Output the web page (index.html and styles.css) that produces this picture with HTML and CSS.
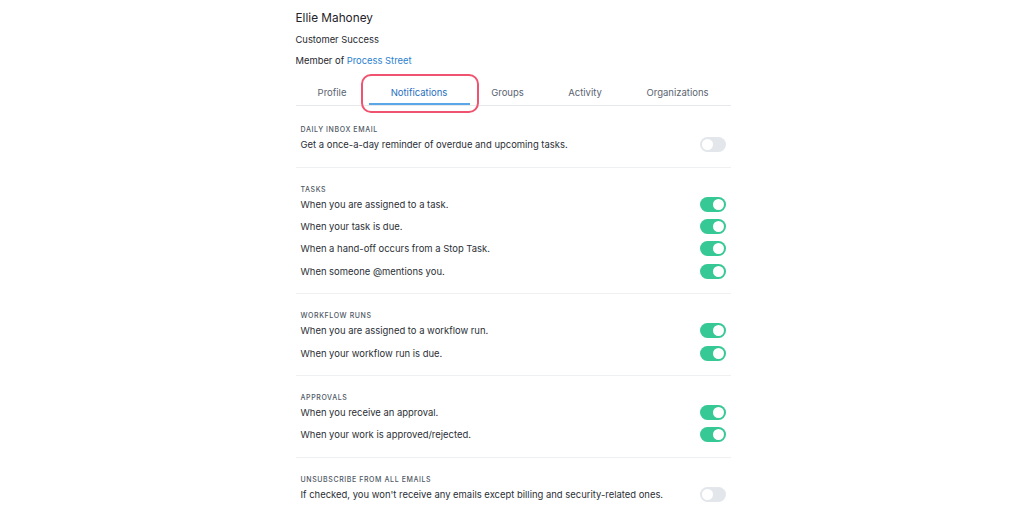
FILE: index.html
```html
<!DOCTYPE html>
<html>
<head>
<meta charset="utf-8">
<link rel="stylesheet" href="styles.css">
</head>
<body>
<div class="page">
  <div class="name">Ellie Mahoney</div>
  <div class="meta">Customer Success</div>
  <div class="meta">Member of <a class="link">Process Street</a></div>
  <nav class="tabs">
    <div class="tab">Profile</div>
    <div class="tab active">Notifications<span class="highlight"></span></div>
    <div class="tab">Groups</div>
    <div class="tab">Activity</div>
    <div class="tab">Organizations</div>
  </nav>
  <section class="section first">
    <div class="label">Daily Inbox Email</div>
    <div class="row"><span>Get a once-a-day reminder of overdue and upcoming tasks.</span><span class="toggle"></span></div>
  </section>
  <section class="section">
    <div class="label">Tasks</div>
    <div class="row"><span>When you are assigned to a task.</span><span class="toggle on"></span></div>
    <div class="row"><span>When your task is due.</span><span class="toggle on"></span></div>
    <div class="row"><span>When a hand-off occurs from a Stop Task.</span><span class="toggle on"></span></div>
    <div class="row"><span>When someone @mentions you.</span><span class="toggle on"></span></div>
  </section>
  <section class="section">
    <div class="label">Workflow Runs</div>
    <div class="row"><span>When you are assigned to a workflow run.</span><span class="toggle on"></span></div>
    <div class="row"><span>When your workflow run is due.</span><span class="toggle on"></span></div>
  </section>
  <section class="section">
    <div class="label">Approvals</div>
    <div class="row"><span>When you receive an approval.</span><span class="toggle on"></span></div>
    <div class="row"><span>When your work is approved/rejected.</span><span class="toggle on"></span></div>
  </section>
  <section class="section">
    <div class="label">Unsubscribe from all emails</div>
    <div class="row"><span>If checked, you won't receive any emails except billing and security-related ones.</span><span class="toggle"></span></div>
  </section>
</div>
</body>
</html>
```
FILE: styles.css
```css
* { box-sizing: border-box; }
html, body { margin: 0; padding: 0; background: #fff; }
body {
  font-family: Inter, "Noto Sans", "Liberation Sans", sans-serif;
  color: #2b2f36;
  display: flex;
  justify-content: center;
}
.page {
  width: 435px;
  margin-left: 2px;
  padding-top: 10px;
}
.name {
  font-size: 11.8px;
  line-height: 16px;
  color: #1f232a;
}
.meta {
  font-size: 9.4px;
  line-height: 14px;
  margin-top: 7px;
  color: #25292f;
}
.link { color: #2a7fd0; text-decoration: none; }
.tabs {
  display: flex;
  margin-top: 7px;
  border-bottom: 1px solid #e6e8eb;
}
.tab {
  position: relative;
  padding: 11px 0 3px;
  font-size: 9.5px;
  line-height: 14px;
  color: #5a6470;
  text-align: center;
  border-bottom: 2px solid transparent;
}
.tab:nth-child(1) { width: 73px; }
.tab:nth-child(2) { width: 101px; }
.tab:nth-child(3) { width: 76px; }
.tab:nth-child(4) { width: 79px; }
.tab:nth-child(5) { width: 106px; }
.tab.active {
  color: #1f6fc0;
  border-bottom-color: #5aa6e6;
}
.highlight {
  position: absolute;
  left: -8px;
  right: -9px;
  top: -1px;
  bottom: -10px;
  border: 2.5px solid #f0536f;
  border-radius: 10px;
}
.section {
  padding: 17px 5px 11px 5px;
  border-top: 1px solid #eef0f2;
}
.section.first {
  padding-top: 19px;
  padding-bottom: 11.5px;
  border-top: none;
}
.label {
  font-size: 7px;
  line-height: 10px;
  margin-bottom: -2px;
  letter-spacing: 0.6px;
  text-transform: uppercase;
  font-weight: 500;
  color: #4e5865;
}
.row {
  display: flex;
  align-items: center;
  justify-content: space-between;
  height: 22.4px;
  font-size: 9.45px;
  color: #2b2f36;
}
.toggle {
  position: relative;
  width: 26px;
  height: 15px;
  border-radius: 8px;
  background: #e3e7eb;
  flex: none;
}
.toggle::after {
  content: "";
  position: absolute;
  top: 2px;
  left: 2px;
  width: 11px;
  height: 11px;
  border-radius: 50%;
  background: #fff;
}
.toggle.on { background: #37c995; }
.toggle.on::after { left: 13px; }
```
